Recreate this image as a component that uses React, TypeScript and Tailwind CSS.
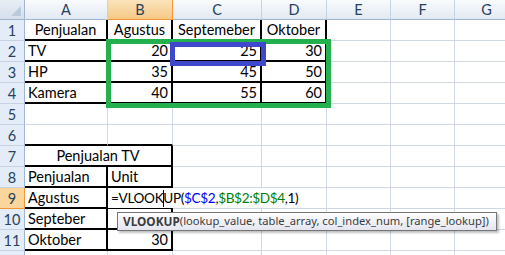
import React from "react";

type Cell = {
  text?: React.ReactNode;
  align?: "left" | "right" | "center";
  r?: boolean; // thick right border
  b?: boolean; // thick bottom border
  span?: number;
  edit?: boolean;
};

const COLS = ["A", "B", "C", "D", "E", "F", "G"];

const blank = (): Cell => ({});

const rows: Cell[][] = [
  [
    { text: "Penjualan", align: "center", r: true, b: true },
    { text: "Agustus", align: "center", r: true, b: true },
    { text: "Septemeber", align: "center", r: true, b: true },
    { text: "Oktober", align: "center", r: true, b: true },
    blank(),
    blank(),
    blank(),
  ],
  [
    { text: "TV", r: true, b: true },
    { text: "20", align: "right", r: true, b: true },
    { text: "25", align: "right", r: true, b: true },
    { text: "30", align: "right", r: true, b: true },
    blank(),
    blank(),
    blank(),
  ],
  [
    { text: "HP", r: true, b: true },
    { text: "35", align: "right", r: true, b: true },
    { text: "45", align: "right", r: true, b: true },
    { text: "50", align: "right", r: true, b: true },
    blank(),
    blank(),
    blank(),
  ],
  [
    { text: "Kamera", r: true, b: true },
    { text: "40", align: "right", r: true, b: true },
    { text: "55", align: "right", r: true, b: true },
    { text: "60", align: "right", r: true, b: true },
    blank(),
    blank(),
    blank(),
  ],
  [blank(), blank(), blank(), blank(), blank(), blank(), blank()],
  [{ b: true }, { b: true }, blank(), blank(), blank(), blank(), blank()],
  [
    { text: "Penjualan TV", align: "center", r: true, b: true, span: 2 },
    blank(),
    blank(),
    blank(),
    blank(),
    blank(),
  ],
  [
    { text: "Penjualan", r: true, b: true },
    { text: "Unit", r: true, b: true },
    blank(),
    blank(),
    blank(),
    blank(),
    blank(),
  ],
  [
    { text: "Agustus", r: true, b: true },
    { edit: true, r: true, b: true },
    blank(),
    blank(),
    blank(),
    blank(),
    blank(),
  ],
  [
    { text: "Septeber", r: true, b: true },
    { r: true, b: true },
    blank(),
    blank(),
    blank(),
    blank(),
    blank(),
  ],
  [
    { text: "Oktober", r: true, b: true },
    { text: "30", align: "right", r: true, b: true },
    blank(),
    blank(),
    blank(),
    blank(),
    blank(),
  ],
  [blank(), blank(), blank(), blank(), blank(), blank(), blank()],
];

function Formula() {
  return (
    <span className="whitespace-nowrap text-[13.6px] tracking-[-0.35px]">
      =VLOOK
      <span className="relative inline-block w-0">
        <span className="absolute left-[-0.5px] top-[-13px] h-[17px] w-px bg-black" />
      </span>
      UP(<span className="text-[#0000ff]">$C$2</span>,
      <span className="text-[#008000]">$B$2:$D$4</span>,1)
    </span>
  );
}

function GridCell({ cell }: { cell: Cell }) {
  const right = cell.r
    ? "border-r-2 border-r-black"
    : "border-r border-r-[#d0d7e5]";
  const bottom = cell.b
    ? "border-b-2 border-b-black"
    : "border-b border-b-[#d0d7e5]";
  const align =
    cell.align === "right"
      ? "justify-end"
      : cell.align === "center"
        ? "justify-center"
        : "justify-start";
  const span = cell.span === 2 ? "col-span-2" : "";
  if (cell.edit) {
    return (
      <div className="relative border-b-2 border-b-black">
        <div className="absolute left-0 top-0 z-10 flex h-[20px] w-[185px] items-center bg-white pl-[3px] pt-[1px]">
          <Formula />
        </div>
      </div>
    );
  }
  return (
    <div
      className={`flex items-center overflow-visible whitespace-nowrap px-[3px] pt-[1px] ${right} ${bottom} ${align} ${span}`}
    >
      {cell.text}
    </div>
  );
}

export default function App() {
  return (
    <div className="relative h-[255px] w-[505px] overflow-hidden bg-white font-['Lato','Noto_Sans',sans-serif] text-[14.5px] text-black">
      <div className="grid grid-cols-[25px_83px_65px_89px_65px_64px_64px_64px] grid-rows-[20px_repeat(12,21px)]">
        {/* corner */}
        <div className="relative border-b border-r border-[#9eb6ce] bg-gradient-to-b from-[#e9eef5] to-[#d5dfeb]">
          <svg
            className="absolute right-[3px] bottom-[3px]"
            width="10"
            height="10"
            viewBox="0 0 10 10"
          >
            <polygon points="10,0 10,10 0,10" fill="#b9cadd" />
          </svg>
        </div>
        {/* column headers */}
        {COLS.map((c) => (
          <div
            key={c}
            className={`flex items-center justify-center border-b border-r pt-[1px] text-[#27415f] ${
              c === "B"
                ? "border-r-[#f29536] border-b-[#f29536] bg-gradient-to-b from-[#fae3bb] to-[#f6c985]"
                : "border-r-[#c5d2e3] border-b-[#9eb6ce] bg-gradient-to-b from-[#f9fbfd] to-[#e2e9f2]"
            }`}
          >
            {c}
          </div>
        ))}
        {rows.map((row, i) => (
          <React.Fragment key={i}>
            <div
              className={`flex items-center justify-center border-b border-r pt-[1px] text-[#27415f] ${
                i === 8
                  ? "border-b-[#f29536] border-r-[#f29536] bg-[#fbd69c]"
                  : "border-b-[#c5d2e3] border-r-[#9eb6ce] bg-[#e4ecf7]"
              }`}
            >
              {i + 1}
            </div>
            {row.map((cell, j) => (
              <GridCell key={j} cell={cell} />
            ))}
          </React.Fragment>
        ))}
      </div>

      {/* highlight marks drawn over the sheet */}
      <div className="pointer-events-none absolute left-[106px] top-[39px] h-[69px] w-[225px] border-[5px] border-[#22b14c]" />
      <div className="pointer-events-none absolute left-[170px] top-[42px] h-[24px] w-[96px] border-[5px] border-[#3f48cc]" />

      {/* function argument tooltip */}
      <div className="absolute left-[117px] top-[212px] z-20 flex h-[19px] w-[380px] items-center whitespace-nowrap border border-[#767676] bg-gradient-to-b from-white to-[#e4e5f0] pl-[5px] font-['Noto_Sans',sans-serif] text-[#3c3c3c] shadow-[2px_2px_2px_rgba(0,0,0,0.25)]">
        <span className="text-[11.8px] font-bold">VLOOKUP</span>
        <span className="text-[11.2px]">
          (lookup_value, table_array, col_index_num, [range_lookup])
        </span>
      </div>
    </div>
  );
}
